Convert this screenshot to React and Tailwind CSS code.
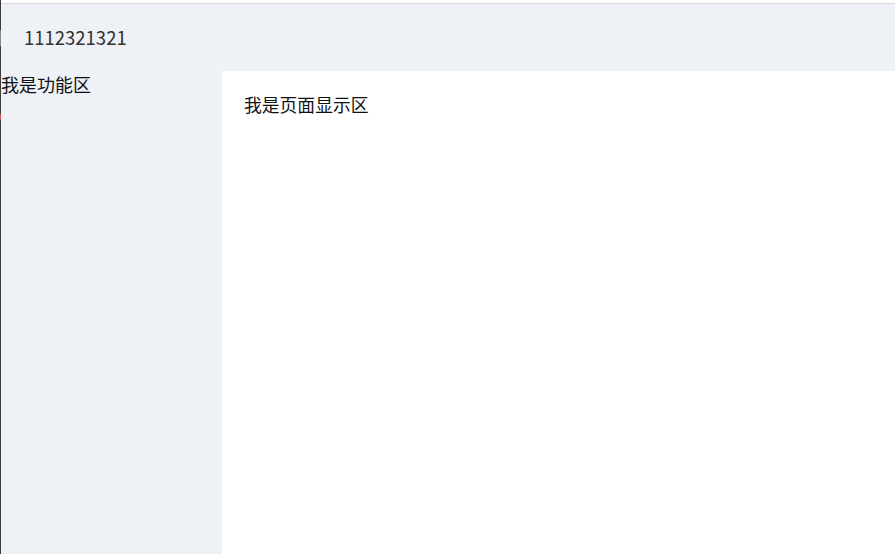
import React from 'react';

const font = { fontFamily: '"Noto Sans CJK SC", "Noto Sans", sans-serif' };

function Header() {
  return (
    <header className="h-[67px] bg-[#eef1f6] flex items-center pl-[23px]">
      <span className="text-[18.5px] text-[#333]">1112321321</span>
    </header>
  );
}

function Sidebar() {
  return (
    <aside className="w-[221px] shrink-0 bg-[#eef1f6]">
      <div className="text-[18px] leading-[27px] text-[#111]">我是功能区</div>
    </aside>
  );
}

function Main() {
  return (
    <main className="flex-1 bg-white pl-[22px] pt-[20px]">
      <div className="text-[17.8px] leading-[27px] text-[#111]">我是页面显示区</div>
    </main>
  );
}

export default function App() {
  return (
    <div className="flex h-[554px] w-full overflow-hidden" style={font}>
      {/* window edge */}
      <div className="w-px shrink-0 flex flex-col bg-[#3c3c3c]">
        <div className="h-[30px]" />
        <div className="h-[16px] bg-[#8a8a8a]" />
        <div className="h-[68px]" />
        <div className="h-[6px] bg-[#c85050]" />
      </div>
      <div className="flex-1 flex flex-col min-w-0">
        <div className="h-[3px] bg-white border-b border-[#dcdcdc] box-content" />
        <Header />
        <div className="flex flex-1">
          <Sidebar />
          <Main />
        </div>
      </div>
    </div>
  );
}
